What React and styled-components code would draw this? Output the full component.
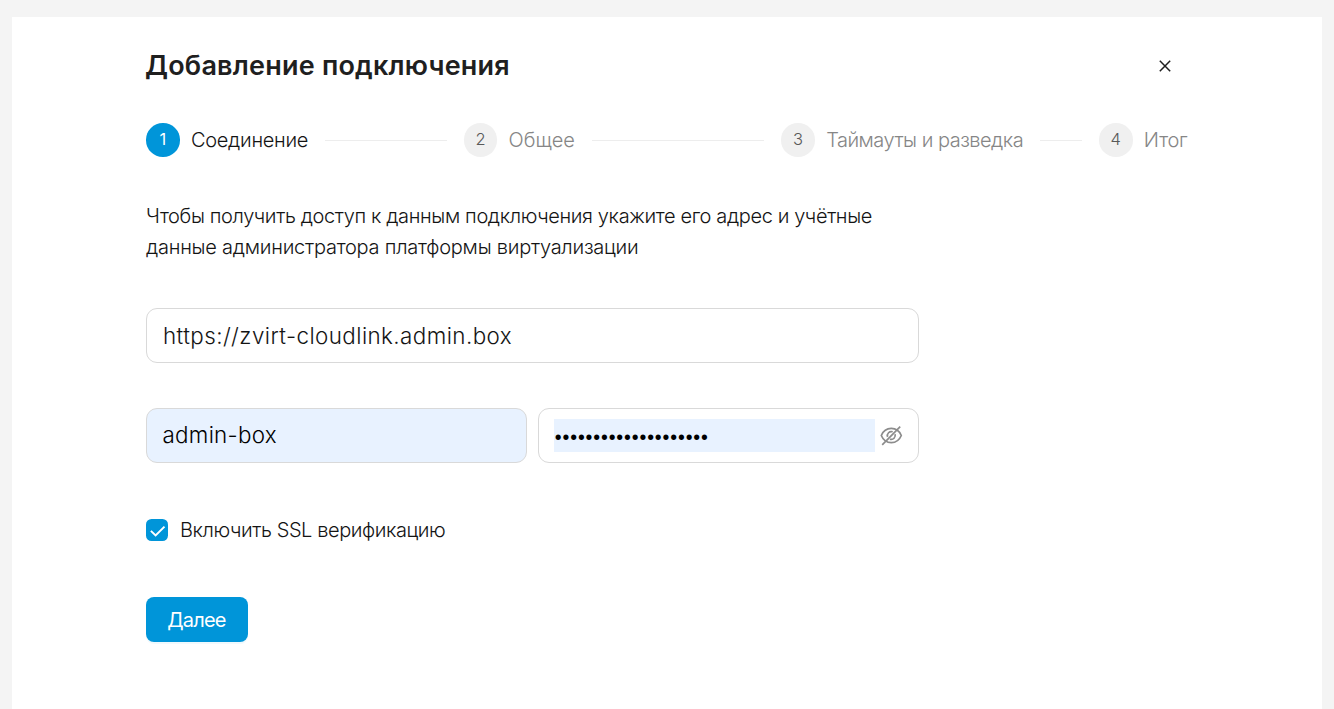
import React from "react";
import styled, { createGlobalStyle } from "styled-components";

const GlobalStyle = createGlobalStyle`
  *, *::before, *::after { box-sizing: border-box; }
  html, body { margin: 0; background: #f4f4f4; overflow: hidden; }
  body { font-family: Inter, "Liberation Sans", sans-serif; color: #1f1f1f; }
`;

const Page = styled.main`
  height: 709px;
  padding: 17px 12px 0;
  background: #f4f4f4;
`;

const Panel = styled.section`
  height: 100%;
  padding: 30px 134px 0;
  background: #fff;
`;

const Header = styled.header`
  display: flex;
  align-items: center;
  justify-content: space-between;
  height: 38px;
  padding-right: 10px;
`;

const Title = styled.h1`
  margin: 0 0 0 -1px;
  font-size: 27px;
  line-height: 38px;
  font-weight: 600;
  letter-spacing: 0.21px;
  white-space: nowrap;
`;

const CloseButton = styled.button`
  display: flex;
  padding: 0;
  border: 0;
  background: none;
  color: #1f1f1f;
`;

const Steps = styled.ol`
  display: grid;
  grid-template-columns: repeat(3, 317.67px) max-content;
  margin: 38px 0 0;
  padding: 0;
  list-style: none;
`;

const Step = styled.li`
  display: flex;
  align-items: center;
  height: 34px;
  color: ${(p) => (p.$active ? "#141414" : "#868686")};
`;

const StepNumber = styled.span`
  flex: none;
  width: 33.6px;
  height: 33.6px;
  margin-right: 11.3px;
  border-radius: 50%;
  background: ${(p) => (p.$active ? "#0095d9" : "#f0f0f0")};
  color: ${(p) => (p.$active ? "#fff" : "#595959")};
  font-size: 16.5px;
  font-weight: ${(p) => (p.$active ? 400 : 300)};
  line-height: 33px;
  text-align: center;
`;

const StepTitle = styled.span`
  font-size: 20px;
  font-weight: 300;
  letter-spacing: ${(p) => p.$tracking}px;
  white-space: nowrap;
`;

const StepLine = styled.span`
  flex: 1;
  height: 1px;
  margin: 1px 17px 0;
  background: #ededed;
`;

const Intro = styled.p`
  margin: 44px 0 0;
  color: #141414;
  font-size: 20px;
  line-height: 31px;
  font-weight: 300;
`;

const Line = styled.span`
  display: block;
  letter-spacing: ${(p) => p.$tracking}px;
  white-space: nowrap;
`;

const Form = styled.form`
  width: 773px;
  margin-top: 45px;
`;

const Field = styled.div`
  display: flex;
  align-items: center;
  flex: 1;
  height: 55px;
  padding: 0 15px;
  border: 1px solid #d9d9d9;
  border-radius: 11px;
  background: ${(p) => (p.$filled ? "#e8f2ff" : "#fff")};
`;

const Input = styled.input`
  flex: 1;
  min-width: 0;
  height: 33px;
  padding: ${(p) => (p.$filled ? "0 1px 2px 0.5px" : "0 1px")};
  border: 0;
  outline: 0;
  background: transparent;
  color: ${(p) => (p.$filled ? "#000" : "#141414")};
  font: 300 22.4px Inter, "Liberation Sans", sans-serif;
  letter-spacing: ${(p) => p.$tracking}px;
`;

const PasswordInput = styled(Input)`
  padding: 3px 0 0 0.8px;
  background: #e8f2ff;
  color: #000;
  font: 400 19.5px "Liberation Sans", sans-serif;
  letter-spacing: 0.87px;
`;

const Credentials = styled.div`
  display: flex;
  gap: 11px;
  margin-top: 45px;
`;

const EyeIcon = styled.svg`
  flex: none;
  margin: 0 0 0 5px;
`;

const CheckRow = styled.label`
  display: flex;
  align-items: center;
  gap: 12px;
  height: 30px;
  margin-top: 52px;
  color: #141414;
  font-size: 20px;
  font-weight: 300;
`;

const CheckBox = styled.span`
  display: flex;
  width: 22px;
  height: 22px;
  border-radius: 5.5px;
  background: #0095d9;
`;

const CheckText = styled.span`
  letter-spacing: -0.41px;
  white-space: nowrap;
`;

const NextButton = styled.button`
  display: flex;
  align-items: center;
  justify-content: center;
  width: 102px;
  height: 45px;
  margin-top: 52px;
  padding: 1px 1px 0 0;
  border: 0;
  border-radius: 8px;
  background: #0095d9;
  box-shadow: 0 2px 0 rgba(0, 149, 217, 0.06);
  color: #fff;
  font: 400 20px Inter, "Liberation Sans", sans-serif;
  letter-spacing: -0.8px;
`;

const STEPS = [
  { title: "Соединение", tracking: -0.28 },
  { title: "Общее", tracking: 0 },
  { title: "Таймауты и разведка", tracking: -0.5 },
  { title: "Итог", tracking: -0.25 },
];

export default function App() {
  return (
    <Page>
      <GlobalStyle />
      <Panel>
        <Header>
          <Title>Добавление подключения</Title>
          <CloseButton type="button" aria-label="Закрыть">
            <svg width="26" height="26" viewBox="0 0 26 26" fill="none" stroke="currentColor" strokeWidth="1.5">
              <path d="M7.8 7.8L18.2 18.2M18.2 7.8L7.8 18.2" />
            </svg>
          </CloseButton>
        </Header>
        <Steps>
          {STEPS.map((step, i) => (
            <Step key={step.title} $active={i === 0}>
              <StepNumber $active={i === 0}>{i + 1}</StepNumber>
              <StepTitle $tracking={step.tracking}>{step.title}</StepTitle>
              {i < STEPS.length - 1 && <StepLine />}
            </Step>
          ))}
        </Steps>
        <Intro>
          <Line $tracking={-0.37}>Чтобы получить доступ к данным подключения укажите его адрес и учётные</Line>
          <Line $tracking={-0.24}>данные администратора платформы виртуализации</Line>
        </Intro>
        <Form>
          <Field>
            <Input readOnly value="https://zvirt-cloudlink.admin.box" $tracking={0.42} />
          </Field>
          <Credentials>
            <Field $filled>
              <Input readOnly value="admin-box" $filled $tracking={0.27} />
            </Field>
            <Field>
              <PasswordInput type="password" readOnly value="aaaaaaaaaaaaaaaaaaaa" />
              <EyeIcon width="23" height="22" viewBox="0 0 23 22" fill="none" stroke="#8c8c8c" strokeWidth="1.7">
                <path d="M1.3 10.5C3.2 5.9 6.8 3.4 11.3 3.4S19.4 5.9 21.3 10.5C19.4 15.1 15.8 17.6 11.3 17.6S3.2 15.1 1.3 10.5Z" />
                <path d="M7.6 11.9A4 4 0 0 1 12.7 6.8M15 9.1A4 4 0 0 1 9.9 14.2" />
                <path d="M2.2 19.8L20.2 1.6" />
              </EyeIcon>
            </Field>
          </Credentials>
          <CheckRow>
            <CheckBox>
              <svg width="22" height="22" viewBox="0 0 22 22" fill="none" stroke="#fff" strokeWidth="2">
                <path d="M4.9 11.9L9.6 16.4L18.5 7.6" />
              </svg>
            </CheckBox>
            <CheckText>Включить SSL верификацию</CheckText>
          </CheckRow>
          <NextButton type="button">Далее</NextButton>
        </Form>
      </Panel>
    </Page>
  );
}
